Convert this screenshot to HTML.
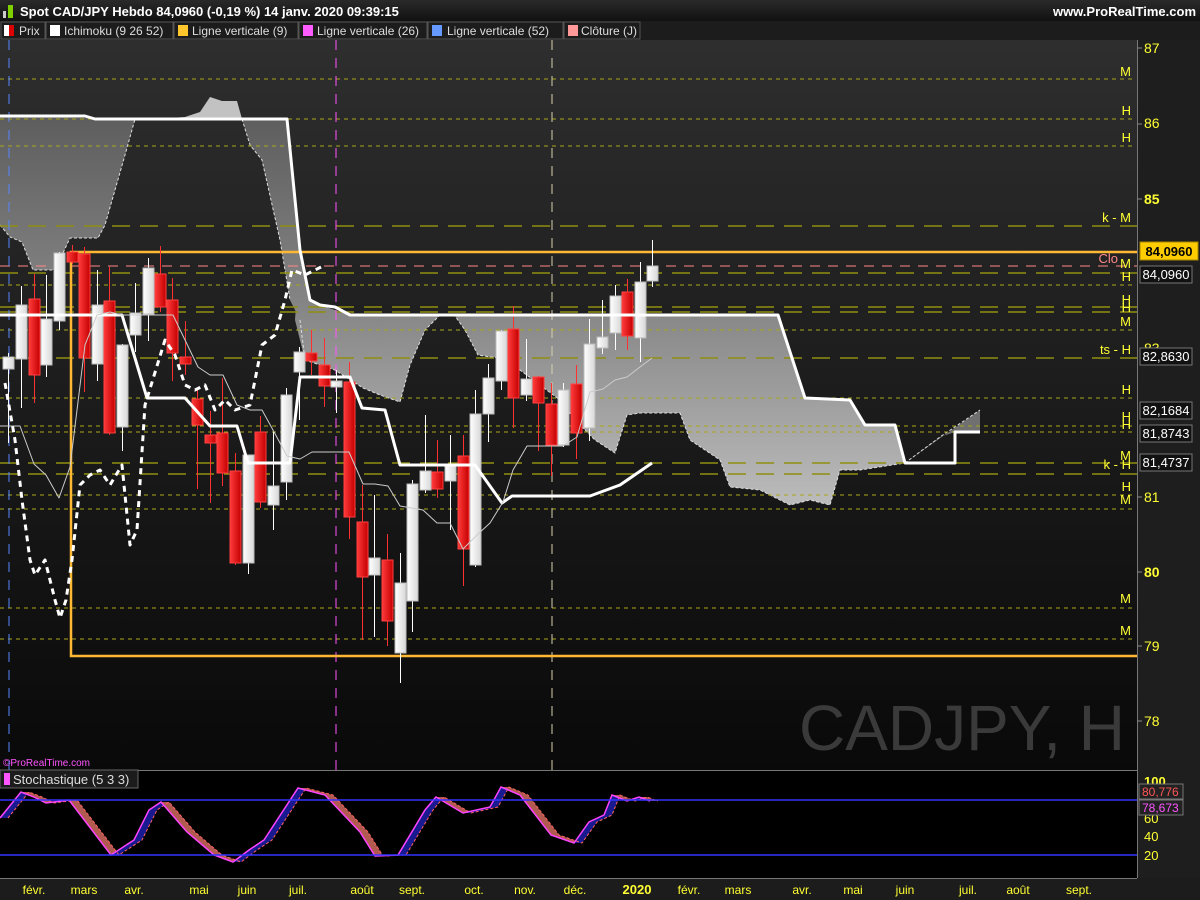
<!DOCTYPE html>
<html><head><meta charset="utf-8"><style>
body{margin:0;width:1200px;height:900px;overflow:hidden;background:#000;font-family:"Liberation Sans",sans-serif}
svg{display:block}
</style></head><body>
<svg id="s" width="1200" height="900" xmlns="http://www.w3.org/2000/svg" font-family="Liberation Sans, sans-serif">
<defs>
<linearGradient id="bg" x1="0" y1="0" x2="0" y2="1"><stop offset="0" stop-color="#2e2e2e"/><stop offset="1" stop-color="#090909"/></linearGradient>
<linearGradient id="cl" gradientUnits="userSpaceOnUse" x1="0" y1="100" x2="0" y2="510"><stop offset="0" stop-color="#5a5a5a"/><stop offset="0.5" stop-color="#858585"/><stop offset="1" stop-color="#bdbdbd"/></linearGradient>
<linearGradient id="rd" x1="0" y1="0" x2="1" y2="0"><stop offset="0" stop-color="#ff3a3a"/><stop offset="1" stop-color="#c40000"/></linearGradient>
<linearGradient id="wh" x1="0" y1="0" x2="1" y2="0"><stop offset="0" stop-color="#ffffff"/><stop offset="1" stop-color="#d8d8d8"/></linearGradient>
<linearGradient id="tb" x1="0" y1="0" x2="0" y2="1"><stop offset="0" stop-color="#2a2a2a"/><stop offset="1" stop-color="#111"/></linearGradient>
</defs>
<rect x="0" y="0" width="1200" height="21" fill="url(#tb)"/>
<rect x="3" y="11" width="3" height="7" fill="#ccc"/><rect x="8" y="5" width="5" height="13" fill="#7fd000"/>
<text x="20" y="16" font-size="13" font-weight="bold" fill="#fff">Spot CAD/JPY Hebdo 84,0960 (-0,19 %) 14 janv. 2020 09:39:15</text>
<text x="1196" y="16" font-size="13" font-weight="bold" fill="#fff" text-anchor="end">www.ProRealTime.com</text>
<rect x="0" y="21" width="1200" height="19" fill="#1c1c1c"/>
<g font-size="12" fill="#ddd">
<rect x="1" y="22" width="44" height="17" fill="none" stroke="#555"/><rect x="4" y="25" width="5" height="11" fill="#fff"/><rect x="9" y="25" width="5" height="11" fill="#d00"/><text x="19" y="35">Prix</text>
<rect x="46" y="22" width="127" height="17" fill="none" stroke="#555"/><rect x="50" y="25" width="10" height="11" fill="#fff"/><text x="64" y="35">Ichimoku (9 26 52)</text>
<rect x="174" y="22" width="124" height="17" fill="none" stroke="#555"/><rect x="178" y="25" width="10" height="11" fill="#ffc72c"/><text x="192" y="35">Ligne verticale (9)</text>
<rect x="299" y="22" width="128" height="17" fill="none" stroke="#555"/><rect x="303" y="25" width="10" height="11" fill="#ff5cff"/><text x="317" y="35">Ligne verticale (26)</text>
<rect x="428" y="22" width="135" height="17" fill="none" stroke="#555"/><rect x="432" y="25" width="10" height="11" fill="#6699ff"/><text x="447" y="35">Ligne verticale (52)</text>
<rect x="564" y="22" width="76" height="17" fill="none" stroke="#555"/><rect x="568" y="25" width="10" height="11" fill="#ff9999"/><text x="581" y="35">Clôture (J)</text>
</g>
<rect x="0" y="40" width="1137" height="730" fill="url(#bg)"/>
<rect x="1137" y="40" width="63" height="838" fill="#1e1e1e"/>
<line x1="1137.5" y1="40" x2="1137.5" y2="878" stroke="#777"/>
<text x="1125" y="750" font-size="64" fill="#3a3a3a" text-anchor="end">CADJPY, H</text>
<polygon fill="url(#cl)" points="0,116 135,119 125,155 105,225 98,238 70,238 55,270 33,270 22,242 10,237 0,225"/>
<polygon fill="#c2c2c2" points="155,119 185,117 200,112 210,97 222,101 237,101 242,119"/>
<polygon fill="url(#cl)" points="242,119 287,119 300,245 310,300 300,320 290,300 280,240 262,160 250,145"/>
<polygon fill="url(#cl)" points="300,250 310,300 320,305 350,315 778,315 805,398 850,400 865,425 895,425 905,463 860,470 840,470 830,505 810,500 790,505 760,490 730,487 720,460 690,440 680,413 640,413 627,415 615,453 595,440 575,420 560,400 540,385 520,370 510,358 490,357 478,355 465,330 455,316 440,315 425,330 410,365 400,402 380,395 363,388 335,370 305,360 295,320"/>
<polygon fill="#707070" points="905,463 980,410 980,432 955,432 940,437"/>
<g fill="none" stroke="#ddd" stroke-width="1" stroke-dasharray="3,2">
<polyline points="0,225 10,237 22,242 33,270 55,270 70,238 98,238 105,225 125,155 135,119"/>
<polyline points="242,119 250,145 262,160 280,240 290,300"/>
<polyline points="300,320 305,360 335,370 363,388 380,395 400,402 410,365 425,330 440,315 455,316 465,330 478,355 490,357 510,358 520,370 540,385 560,400 575,420 595,440 615,453 627,415 640,413 680,413 690,440 720,460 730,487 760,490 790,505 810,500 830,505 840,470 860,470 905,463"/>
<polyline points="905,463 940,437 980,410"/>
</g>
<g stroke="#a8a818" stroke-width="1" stroke-dasharray="4,4">
<line x1="0" y1="79" x2="1133" y2="79"/><line x1="0" y1="119" x2="1133" y2="119"/><line x1="0" y1="146" x2="1133" y2="146"/>
<line x1="0" y1="285" x2="1133" y2="285"/><line x1="0" y1="330" x2="1133" y2="330"/><line x1="0" y1="398" x2="1133" y2="398"/>
<line x1="0" y1="426" x2="1133" y2="426"/><line x1="0" y1="432" x2="1133" y2="432"/><line x1="0" y1="495" x2="1133" y2="495"/>
<line x1="0" y1="509" x2="1133" y2="509"/><line x1="0" y1="608" x2="1133" y2="608"/><line x1="0" y1="639" x2="1133" y2="639"/>
</g>
<g stroke="#8f8f10" stroke-width="1.5" stroke-dasharray="18,10">
<line x1="0" y1="226" x2="1137" y2="226"/><line x1="0" y1="273" x2="1137" y2="273"/><line x1="0" y1="307" x2="1137" y2="307"/>
<line x1="0" y1="312" x2="1137" y2="312"/><line x1="0" y1="358" x2="1137" y2="358"/><line x1="0" y1="463" x2="1137" y2="463"/><line x1="0" y1="474" x2="1137" y2="474"/>
</g>
<line x1="0" y1="266" x2="1137" y2="266" stroke="#ff8888" stroke-dasharray="10,8"/>
<line x1="9" y1="40" x2="9" y2="770" stroke="#5588ff" stroke-dasharray="10,8"/>
<line x1="336" y1="40" x2="336" y2="770" stroke="#ff55ff" stroke-dasharray="10,8"/>
<line x1="552" y1="40" x2="552" y2="770" stroke="#d8d0b0" stroke-dasharray="10,8"/>
<polyline points="1137,252 71,252 71,656 1137,656" fill="none" stroke="#ffb833" stroke-width="2.5"/>
<g id="cand"></g>
<g fill="none" stroke="#fff" stroke-linejoin="round">
<polyline stroke-width="3" points="0,116 85,116 95,119 287,119 300,250 310,300 320,305 335,307 350,315 778,315 805,398 850,400 865,425 895,425 905,463 955,463 955,432 980,432"/>
<polyline stroke-width="3" points="0,315 122,315 147,398 185,398 210,426 237,426 248,463 290,463 300,377 350,377 362,408 385,410 400,465 475,465 502,503 512,496 590,496 620,485 652,463"/>
<polyline stroke-width="1" stroke="#ccc" points="0,426 20,426 34,464 46,475 59,498 70,467 85,345 97,315 110,312 122,315 173,315 198,367 210,375 223,375 237,405 250,410 262,410 273,430 287,456 300,459 312,452 349,452 363,484 375,484 388,486 400,506 423,510 437,523 450,523 463,549 477,535 490,523 503,502 513,470 527,446 563,446 577,437 590,392 603,389 615,380 627,377 640,367 652,358"/>
<polyline stroke-width="3" stroke-dasharray="6,5" points="5,383 15,440 22,500 30,560 35,575 45,560 55,600 60,618 66,600 72,560 80,485 90,475 100,470 110,485 122,465 130,545 137,530 145,405 165,340 175,355 185,385 195,390 205,385 215,410 225,400 235,410 250,405 262,345 275,335 285,300 292,270 305,275 325,265"/>
</g>
<g font-size="13" fill="#ffff33" text-anchor="end">
<text x="1131" y="76">M</text><text x="1131" y="115">H</text><text x="1131" y="142">H</text><text x="1131" y="222">k - M</text>
<text x="1131" y="268">M</text><text x="1131" y="281">H</text><text x="1131" y="304">H</text><text x="1131" y="312">H</text><text x="1131" y="326">M</text>
<text x="1131" y="354">ts - H</text><text x="1131" y="394">H</text><text x="1131" y="421">H</text><text x="1131" y="429">H</text><text x="1131" y="460">M</text>
<text x="1131" y="469">k - H</text><text x="1131" y="491">H</text><text x="1131" y="504">M</text><text x="1131" y="603">M</text><text x="1131" y="635">M</text>
</g>
<text x="1118" y="263" font-size="13" fill="#ff8888" text-anchor="end">Clo</text>
<g font-size="14" fill="#ffff33">
<g stroke="#888"><line x1="1137" y1="48" x2="1142" y2="48"/><line x1="1137" y1="124" x2="1142" y2="124"/><line x1="1137" y1="199" x2="1142" y2="199"/><line x1="1137" y1="497" x2="1142" y2="497"/><line x1="1137" y1="572" x2="1142" y2="572"/><line x1="1137" y1="646" x2="1142" y2="646"/><line x1="1137" y1="721" x2="1142" y2="721"/></g>
<text x="1144" y="53">87</text><text x="1144" y="128">86</text><text x="1144" y="204" font-weight="bold">85</text><text x="1144" y="353">83</text>
<text x="1144" y="502">81</text><text x="1144" y="577" font-weight="bold">80</text><text x="1144" y="651">79</text><text x="1144" y="726">78</text>
</g>
<rect x="1140" y="242" width="58" height="18" fill="#ffcc00" stroke="#aa8800"/><text x="1169" y="256" font-size="13" font-weight="bold" fill="#000" text-anchor="middle">84,0960</text>
<g font-size="13" fill="#fff" text-anchor="middle">
<rect x="1140" y="266" width="52" height="17" fill="#111" stroke="#777"/><text x="1166" y="279">84,0960</text>
<rect x="1140" y="348" width="52" height="17" fill="#111" stroke="#777"/><text x="1166" y="361">82,8630</text>
<rect x="1140" y="402" width="52" height="17" fill="#111" stroke="#777"/><text x="1166" y="415">82,1684</text>
<rect x="1140" y="425" width="52" height="17" fill="#111" stroke="#777"/><text x="1166" y="438">81,8743</text>
<rect x="1140" y="454" width="52" height="17" fill="#111" stroke="#777"/><text x="1166" y="467">81,4737</text>
</g>
<text x="3" y="766" font-size="10" fill="#ff55ff">©ProRealTime.com</text>
<rect x="0" y="770" width="1137" height="108" fill="#000"/>
<line x1="0" y1="770.5" x2="1137" y2="770.5" stroke="#777"/>
<rect x="0" y="770" width="138" height="18" fill="#1c1c1c" stroke="#666"/>
<rect x="4" y="773" width="6" height="12" fill="#ff55ff"/>
<text x="13" y="784" font-size="13" fill="#ddd">Stochastique (5 3 3)</text>
<g id="st"></g>
<line x1="0" y1="800" x2="1137" y2="800" stroke="#3333ff" stroke-width="1.5"/>
<line x1="0" y1="855" x2="1137" y2="855" stroke="#3333ff" stroke-width="1.5"/>
<g font-size="13" fill="#ffff33">
<text x="1144" y="786" font-weight="bold">100</text><text x="1144" y="823">60</text><text x="1144" y="841">40</text><text x="1144" y="860">20</text>
</g>
<rect x="1139" y="784" width="44" height="15" fill="#222" stroke="#777"/><text x="1142" y="796" font-size="12" fill="#ff5555">80,776</text>
<rect x="1139" y="800" width="44" height="15" fill="#222" stroke="#777"/><text x="1142" y="812" font-size="12" fill="#ff55ff">78,673</text>
<rect x="0" y="878" width="1200" height="22" fill="#1c1c1c"/>
<line x1="0" y1="878.5" x2="1137" y2="878.5" stroke="#777"/>
<g font-size="12" fill="#ffff33" text-anchor="middle">
<text x="34" y="894">févr.</text><text x="84" y="894">mars</text><text x="134" y="894">avr.</text><text x="199" y="894">mai</text><text x="247" y="894">juin</text><text x="298" y="894">juil.</text><text x="362" y="894">août</text><text x="412" y="894">sept.</text><text x="474" y="894">oct.</text><text x="525" y="894">nov.</text><text x="575" y="894">déc.</text><text x="637" y="894" font-weight="bold" font-size="13">2020</text><text x="689" y="894">févr.</text><text x="738" y="894">mars</text><text x="802" y="894">avr.</text><text x="853" y="894">mai</text><text x="905" y="894">juin</text><text x="968" y="894">juil.</text><text x="1018" y="894">août</text><text x="1079" y="894">sept.</text>
</g>
</svg>
<script>
var NS="http://www.w3.org/2000/svg";
function el(p,t,a){var e=document.createElementNS(NS,t);for(var k in a)e.setAttribute(k,a[k]);p.appendChild(e);return e;}
var C=[[8,'w',357,369,353,443],[21,'w',305,359,286,408],[34,'r',299,375,274,403],[46,'w',319,365,275,377],[59,'w',253,321,252,330],[72,'r',252,262,245,264],[84,'r',254,358,247,392],[97,'w',305,364,270,381],[109,'r',301,433,267,435],[122,'w',345,427,344,451],[135,'w',313,335,283,352],[148,'w',268,314,258,341],[160,'r',274,307,246,312],[172,'r',300,353,278,381],[185,'r',357,364,321,375],[197,'r',399,425,389,489],[210,'r',435,443,411,503],[222,'r',433,473,378,486],[235,'r',471,563,453,565],[248,'w',455,563,455,574],[260,'r',432,502,416,508],[273,'w',486,505,432,530],[286,'w',395,482,388,500],[299,'w',352,372,347,420],[311,'r',353,361,330,375],[324,'r',365,386,338,407],[336,'w',381,387,370,413],[349,'r',382,517,362,539],[362,'r',522,577,485,640],[374,'w',558,575,495,637],[387,'r',560,621,534,646],[400,'w',583,653,553,683],[412,'w',484,601,480,632],[425,'w',471,490,415,493],[437,'r',472,489,440,498],[450,'w',466,481,435,530],[463,'r',456,549,435,586],[475,'w',414,565,390,567],[488,'w',378,414,364,442],[501,'w',331,381,330,390],[513,'r',329,398,306,428],[526,'w',379,395,339,401],[538,'r',377,403,376,451],[551,'r',404,445,383,476],[563,'w',390,445,383,447],[576,'r',384,433,365,459],[589,'w',344,428,319,441],[602,'w',337,348,300,354],[615,'w',296,333,285,350],[627,'r',292,336,279,350],[640,'w',282,338,262,362],[652,'w',266,281,240,287]];
var g=document.getElementById('cand');
C.forEach(function(c){var r=c[1]=='r';el(g,'line',{x1:c[0]+.5,x2:c[0]+.5,y1:c[4],y2:c[5],stroke:r?'#ff3030':'#fff','stroke-width':1});
el(g,'rect',{x:c[0]-5,y:c[2],width:11,height:Math.max(2,c[3]-c[2]),fill:r?'url(#rd)':'url(#wh)',stroke:r?'#ff4040':'#bbb','stroke-width':1});});
var K=[[0,818],[21,792],[34,797],[46,803],[69,800],[111,855],[134,840],[149,810],[161,802],[187,832],[214,855],[233,862],[249,850],[264,840],[298,788],[325,795],[360,832],[375,856],[398,855],[425,810],[436,797],[463,813],[490,807],[501,787],[520,795],[551,835],[574,843],[589,822],[604,815],[612,795],[627,801],[639,797],[650,801]];
var s=document.getElementById('st');var D=K.map(function(p){return [p[0]+8,p[1]];});
for(var i=0;i<K.length-1;i++){var up=K[i+1][1]<K[i][1];
el(s,'polygon',{points:[K[i],K[i+1],D[i+1],D[i]].map(function(p){return p.join(',')}).join(' '),fill:up?'#1a1a90':'#b05a50'});}
el(s,'polyline',{points:D.map(function(p){return p.join(',')}).join(' '),fill:'none',stroke:'#ff6060','stroke-dasharray':'3,2'});
el(s,'polyline',{points:K.map(function(p){return p.join(',')}).join(' '),fill:'none',stroke:'#ff44ff','stroke-width':1.5});
</script>
</body></html>
